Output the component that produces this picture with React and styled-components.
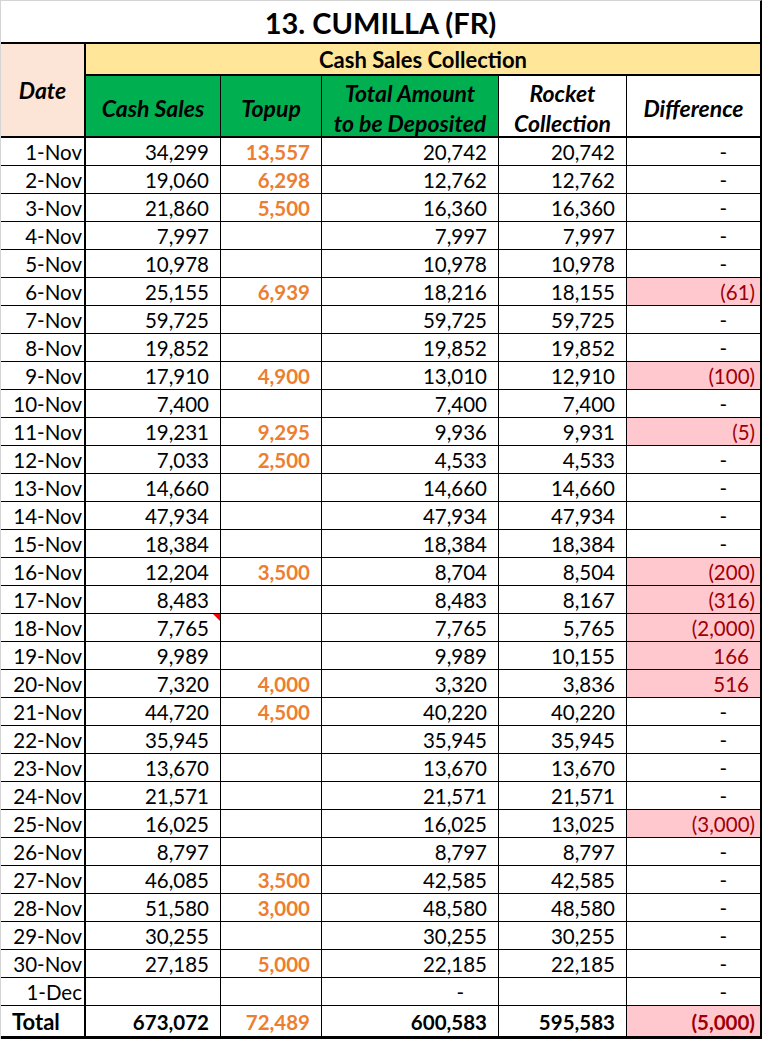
import React from 'react';
import styled, { createGlobalStyle } from 'styled-components';

const GlobalStyle = createGlobalStyle`
  body {
    margin: 0;
    background: #ffffff;
  }
`;

const Sheet = styled.div`
  display: grid;
  grid-template-columns: 85px 135px 101px 177px 128px 133px;
  grid-template-rows: 43px 32px 62px repeat(31, 28px) 33px;
  width: 762px;
  box-sizing: border-box;
  border-top: 1px solid #d4d4d4;
  border-left: 1px solid #d4d4d4;
  border-right: 2px solid #000;
  font-family: Lato, "Liberation Sans", sans-serif;
  color: #000;
`;

const Cell = styled.div`
  box-sizing: border-box;
  position: relative;
  display: flex;
  align-items: center;
  justify-content: flex-end;
  padding: 1px ${p => p.$pr ?? 11}px 0 0;
  border-right: ${p => p.$edge ? 'none' : `${p.$thick ? 2 : 1}px solid #000`};
  border-bottom: ${p => p.$under ?? 1}px solid #000;
  background: ${p => p.$bg || 'transparent'};
  color: ${p => p.$color || '#000'};
  font-size: 20.5px;
  font-weight: ${p => p.$bold ? 700 : 400};
  white-space: nowrap;
`;

const Title = styled.div`
  grid-column: 1 / -1;
  display: flex;
  align-items: center;
  justify-content: center;
  border-bottom: 2px solid #000;
  font-size: 29px;
  font-weight: 700;
  padding-top: 1px;
`;

const DateHead = styled.div`
  grid-row: span 2;
  display: flex;
  align-items: center;
  justify-content: center;
  background: #fce4d6;
  border-right: 2px solid #000;
  border-bottom: 2px solid #000;
  font-size: 23px;
  font-weight: 700;
  font-style: italic;
`;

const GroupHead = styled.div`
  grid-column: 2 / -1;
  display: flex;
  align-items: center;
  justify-content: center;
  background: #ffe699;
  border-bottom: 2px solid #000;
  font-size: 22px;
  font-weight: 700;
  padding-top: 1px;
`;

const ColHead = styled.div`
  box-sizing: border-box;
  display: flex;
  align-items: center;
  justify-content: center;
  text-align: center;
  padding-top: 3px;
  background: ${p => p.$green ? '#00b050' : '#ffffff'};
  border-right: ${p => p.$edge ? 'none' : '1px solid #000'};
  border-bottom: 2px solid #000;
  font-size: 23px;
  font-weight: 700;
  font-style: italic;
  line-height: 30px;
`;

const DateCell = styled(Cell)`
  padding-right: 2px;
`;

const TotalLabel = styled(Cell)`
  justify-content: flex-start;
  padding-left: 11px;
  font-size: 22px;
`;

const Note = styled.span`
  position: absolute;
  top: 0;
  right: 0;
  width: 0;
  height: 0;
  border-top: 7px solid #ff0000;
  border-left: 7px solid transparent;
`;

const rows = [
  ['1-Nov', 34299, 13557, 20742, 20742],
  ['2-Nov', 19060, 6298, 12762, 12762],
  ['3-Nov', 21860, 5500, 16360, 16360],
  ['4-Nov', 7997, null, 7997, 7997],
  ['5-Nov', 10978, null, 10978, 10978],
  ['6-Nov', 25155, 6939, 18216, 18155],
  ['7-Nov', 59725, null, 59725, 59725],
  ['8-Nov', 19852, null, 19852, 19852],
  ['9-Nov', 17910, 4900, 13010, 12910],
  ['10-Nov', 7400, null, 7400, 7400],
  ['11-Nov', 19231, 9295, 9936, 9931],
  ['12-Nov', 7033, 2500, 4533, 4533],
  ['13-Nov', 14660, null, 14660, 14660],
  ['14-Nov', 47934, null, 47934, 47934],
  ['15-Nov', 18384, null, 18384, 18384],
  ['16-Nov', 12204, 3500, 8704, 8504],
  ['17-Nov', 8483, null, 8483, 8167],
  ['18-Nov', 7765, null, 7765, 5765, true],
  ['19-Nov', 9989, null, 9989, 10155],
  ['20-Nov', 7320, 4000, 3320, 3836],
  ['21-Nov', 44720, 4500, 40220, 40220],
  ['22-Nov', 35945, null, 35945, 35945],
  ['23-Nov', 13670, null, 13670, 13670],
  ['24-Nov', 21571, null, 21571, 21571],
  ['25-Nov', 16025, null, 16025, 13025],
  ['26-Nov', 8797, null, 8797, 8797],
  ['27-Nov', 46085, 3500, 42585, 42585],
  ['28-Nov', 51580, 3000, 48580, 48580],
  ['29-Nov', 30255, null, 30255, 30255],
  ['30-Nov', 27185, 5000, 22185, 22185],
  ['1-Dec', null, null, 0, null],
];

const fmt = n => n.toLocaleString('en-US');

const Amount = ({ value, bold, color, note }) => {
  if (value === null) return <Cell $bold={bold}>{note && <Note />}</Cell>;
  if (value === 0) return <Cell $pr={34} $bold={bold}>-</Cell>;
  return <Cell $bold={bold} $color={color}>{fmt(value)}{note && <Note />}</Cell>;
};

const Diff = ({ value, bold, under }) => {
  if (value === 0) return <Cell $edge $pr={33} $bold={bold} $under={under}>-</Cell>;
  const neg = value < 0;
  return (
    <Cell $edge $pr={neg ? 5 : 11} $bg="#ffc7ce" $color="#9c0006" $bold={bold} $under={under}>
      {neg ? `(${fmt(-value)})` : fmt(value)}
    </Cell>
  );
};

const App = () => {
  const total = rows.reduce((t, r) => [t[0] + (r[1] || 0), t[1] + (r[2] || 0), t[2] + r[3], t[3] + (r[4] || 0)], [0, 0, 0, 0]);

  return <>
    <GlobalStyle />
    <Sheet>
      <Title>13. CUMILLA (FR)</Title>
      <DateHead>Date</DateHead>
      <GroupHead>Cash Sales Collection</GroupHead>
      <ColHead $green>Cash Sales</ColHead>
      <ColHead $green>Topup</ColHead>
      <ColHead $green>Total Amount<br />to be Deposited</ColHead>
      <ColHead>Rocket<br />Collection</ColHead>
      <ColHead $edge>Difference</ColHead>

      {rows.map(([date, cash, topup, due, rocket, note]) => (
        <React.Fragment key={date}>
          <DateCell $thick>{date}</DateCell>
          <Amount value={cash} note={note} />
          <Amount value={topup} bold color="#ed7d31" />
          <Amount value={due} />
          <Amount value={rocket} />
          <Diff value={rocket === null ? 0 : rocket - due} />
        </React.Fragment>
      ))}

      <TotalLabel $thick $bold $under={3}>Total</TotalLabel>
      <Cell $bold $under={3}>{fmt(total[0])}</Cell>
      <Cell $bold $under={3} $color="#ed7d31">{fmt(total[1])}</Cell>
      <Cell $bold $under={3}>{fmt(total[2])}</Cell>
      <Cell $bold $under={3}>{fmt(total[3])}</Cell>
      <Diff value={total[3] - total[2]} bold under={3} />
    </Sheet>
  </>;
};

export default App;
